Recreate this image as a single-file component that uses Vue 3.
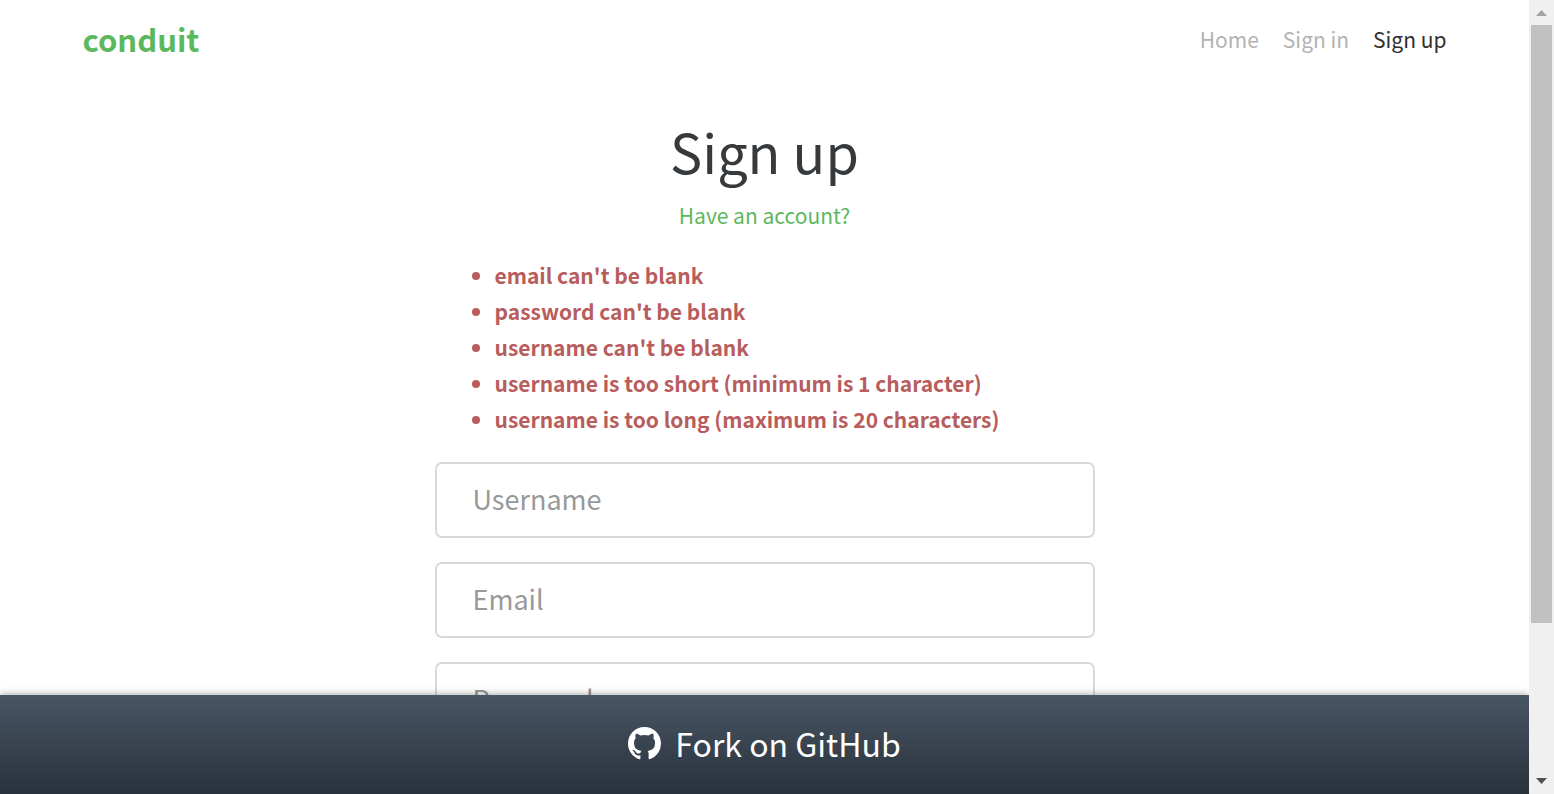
<script setup>
import { ref } from 'vue'

const links = [
  { label: 'Home', href: '#/' },
  { label: 'Sign in', href: '#/login' },
  { label: 'Sign up', href: '#/register', active: true },
]

const errors = [
  "email can't be blank",
  "password can't be blank",
  "username can't be blank",
  'username is too short (minimum is 1 character)',
  'username is too long (maximum is 20 characters)',
]

const fields = ref([
  { id: 'username', label: 'Username', type: 'text', value: '' },
  { id: 'email', label: 'Email', type: 'email', value: '' },
  { id: 'password', label: 'Password', type: 'password', value: '' },
])
</script>

<template>
  <div class="window">
    <div class="view">
      <div class="scroller">
        <nav class="navbar container">
          <a class="brand" href="#/">conduit</a>
          <ul class="links">
            <li v-for="link in links" :key="link.label">
              <a :href="link.href" :class="{ active: link.active }">{{ link.label }}</a>
            </li>
          </ul>
        </nav>

        <main class="auth">
          <h1>Sign up</h1>
          <p class="switch"><a href="#/login">Have an account?</a></p>
          <ul class="errors">
            <li v-for="error in errors" :key="error">{{ error }}</li>
          </ul>
          <form @submit.prevent>
            <input
              v-for="field in fields"
              :id="field.id"
              :key="field.id"
              v-model="field.value"
              :type="field.type"
              :placeholder="field.label"
              :aria-label="field.label"
            />
          </form>
        </main>
      </div>

      <a class="fork" href="#fork">
        <svg viewBox="0 0 16 16" aria-hidden="true">
          <path
            fill="currentColor"
            d="M8 0C3.58 0 0 3.58 0 8c0 3.54 2.29 6.53 5.47 7.59.4.07.55-.17.55-.38 0-.19-.01-.82-.01-1.49-2.01.37-2.53-.49-2.69-.94-.09-.23-.48-.94-.82-1.13-.28-.15-.68-.52-.01-.53.63-.01 1.08.58 1.23.82.72 1.21 1.87.87 2.33.66.07-.52.28-.87.51-1.07-1.78-.2-3.64-.89-3.64-3.95 0-.87.31-1.59.82-2.15-.08-.2-.36-1.02.08-2.12 0 0 .67-.21 2.2.82.64-.18 1.32-.27 2-.27s1.36.09 2 .27c1.53-1.04 2.2-.82 2.2-.82.44 1.1.16 1.92.08 2.12.51.56.82 1.27.82 2.15 0 3.07-1.87 3.75-3.65 3.95.29.25.54.73.54 1.48 0 1.07-.01 1.93-.01 2.2 0 .21.15.46.55.38A8.01 8.01 0 0 0 16 8c0-4.42-3.58-8-8-8z"
          />
        </svg>
        <span>Fork on GitHub</span>
      </a>
    </div>

    <div class="scrollbar" aria-hidden="true">
      <svg class="arrow" viewBox="0 0 25 25"><path fill="#a3a3a3" d="M7 16 12.5 10 18 16z" /></svg>
      <div class="track"><div class="thumb"></div></div>
      <svg class="arrow" viewBox="0 0 25 25"><path fill="#505050" d="M7 9 12.5 15 18 9z" /></svg>
    </div>
  </div>
</template>

<style>
body {
  margin: 0;
}
</style>

<style scoped>
.window {
  display: flex;
  height: 100vh;
  background: #fff;
  color: #373a3c;
  font-family: "Noto Sans CJK SC", "Noto Sans", sans-serif;
  font-size: 21px;
  line-height: 36px;
}

a {
  color: #5cb85c;
  text-decoration: none;
}

.view {
  display: flex;
  flex: 1;
  flex-direction: column;
  min-width: 0;
}

.scroller {
  flex: 1;
  min-height: 0;
  overflow: hidden;
}

.container {
  width: 90%;
  max-width: 1364px;
  margin: 0 auto;
}

.navbar {
  display: flex;
  align-items: center;
  justify-content: space-between;
  height: 77px;
}

.brand {
  font-size: 31px;
  font-weight: 700;
}

.links {
  display: flex;
  gap: 24px;
  margin: 0;
  padding: 0;
  list-style: none;
}

.links a {
  color: #b3b3b3;
}

.links .active {
  color: #303030;
}

.auth {
  width: 90%;
  max-width: 660px;
  margin: 42px auto 0;
}

h1 {
  margin: 0 0 14px;
  font-size: 54px;
  font-weight: 400;
  line-height: 64px;
  text-align: center;
}

.switch {
  margin: 0 0 24px;
  text-align: center;
}

.errors {
  margin: 0 0 25px;
  padding-left: 60px;
  color: #b85c5c;
  font-weight: 700;
}

form {
  display: grid;
  gap: 24px;
}

input {
  box-sizing: border-box;
  width: 100%;
  height: 76px;
  padding: 0 36px 3px;
  border: 2px solid #d9d9d9;
  border-radius: 7px;
  background: #fff;
  color: #55595c;
  font: inherit;
  font-size: 27px;
}

input::placeholder {
  color: #999;
  opacity: 1;
}

.fork {
  position: relative;
  display: flex;
  box-sizing: border-box;
  align-items: center;
  justify-content: center;
  gap: 14px;
  height: 99px;
  padding-bottom: 3px;
  background: linear-gradient(#485563, #29323c);
  box-shadow: 0 0 8px rgba(0, 0, 0, 0.4);
  color: #fff;
  font-size: 32px;
  clip-path: inset(-20px 0 0 0);
}

.fork svg {
  width: 33px;
  height: 33px;
}

.scrollbar {
  display: flex;
  flex-direction: column;
  width: 25px;
  background: #f0f0f0;
}

.arrow {
  width: 25px;
  height: 25px;
}

.track {
  flex: 1;
  padding: 0 2px;
}

.thumb {
  height: 80.4%;
  background: #c1c1c1;
}
</style>
